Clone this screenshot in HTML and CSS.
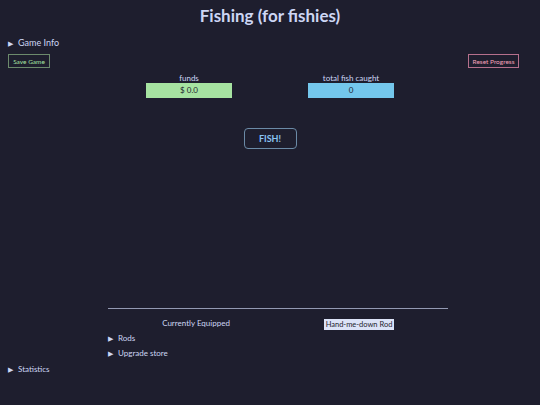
FILE: index.html
```html
<!DOCTYPE html>
<html>
<head>
<meta charset="utf-8">
<link rel="stylesheet" href="styles.css">
</head>
<body>
<h1 class="title">Fishing (for fishies)</h1>
<details class="info"><summary>Game Info</summary></details>
<div class="toolbar">
  <button class="btn btn-save">Save Game</button>
  <button class="btn btn-reset">Reset Progress</button>
</div>
<div class="stats">
  <div class="stat">
    <div class="stat-label">funds</div>
    <div class="stat-box green">$ 0.0</div>
  </div>
  <div class="stat">
    <div class="stat-label">total fish caught</div>
    <div class="stat-box blue">0</div>
  </div>
</div>
<div class="fish-row"><button class="fish">FISH!</button></div>
<div class="lower">
  <hr class="rule">
  <div class="equip">
    <div class="equip-label">Currently Equipped</div>
    <div class="equip-val"><span class="rod">Hand-me-down Rod</span></div>
  </div>
  <details class="sub"><summary>Rods</summary></details>
  <details class="sub"><summary>Upgrade store</summary></details>
</div>
<details class="info stats-panel"><summary>Statistics</summary></details>
</body>
</html>
```
FILE: styles.css
```css
html, body {
  margin: 0;
  padding: 0;
  background: #1e1e2e;
  color: #cdd6f4;
  font-family: Lato, "Open Sans", sans-serif;
  font-size: 9px;
}
body { padding: 0 8px; height: 405px; overflow: hidden; }
.title {
  margin: 0;
  padding-top: 5px;
  text-align: center;
  font-size: 17px;
  font-weight: 700;
  height: 28px;
  line-height: 22px;
}
details summary { cursor: pointer; list-style: none; }
details summary::before { content: "\25B6"; font-size: 7px; margin-right: 5px; }
.info { margin-top: 3px; line-height: 14px; }
.toolbar {
  display: flex;
  justify-content: space-between;
  margin-top: 4px;
  padding-right: 13px;
}
.btn {
  background: transparent;
  font-family: inherit;
  font-size: 6.5px;
  padding: 0;
  height: 14px;
  border-radius: 0;
  white-space: nowrap;
}
.btn-save { color: #a6e3a1; border: 1px solid #6c8a6c; width: 42px; }
.btn-reset { color: #f5a0b8; border: 1px solid #b5708c; width: 51px; }
.stats {
  display: grid;
  grid-template-columns: 162px 162px;
  justify-content: center;
  margin-top: 5px;
}
.stat { display: flex; flex-direction: column; align-items: center; }
.stat-label { line-height: 10px; font-size: 8px; }
.stat-box {
  width: 86px;
  height: 15px;
  line-height: 15px;
  text-align: center;
  color: #1e1e2e;
  font-size: 8px;
}
.green { background: #a6e3a1; }
.blue { background: #74c7ec; }
.fish-row { display: flex; justify-content: center; margin-top: 30px; }
.fish {
  width: 53px;
  height: 21px;
  background: transparent;
  border: 1px solid #6b8aa6;
  border-radius: 4px;
  color: #89c4f4;
  font-family: inherit;
  font-size: 9px;
  font-weight: 700;
}
.lower { margin-left: 100px; width: 340px; margin-top: 159px; }
.rule { border: 0; border-top: 1px solid #9399b2; margin: 0; }
.equip {
  display: grid;
  grid-template-columns: 176px 150px;
  margin-top: 8px;
  height: 12px;
  align-items: center;
}
.equip-label { text-align: center; font-size: 8px; }
.equip-val { text-align: center; }
.rod { background: #dce3f7; color: #1e1e2e; padding: 1px 2px; font-size: 7.5px; }
.sub { margin-top: 3px; line-height: 12px; font-size: 8px; }
.stats-panel { margin-top: 3px; font-size: 8px; }
```
